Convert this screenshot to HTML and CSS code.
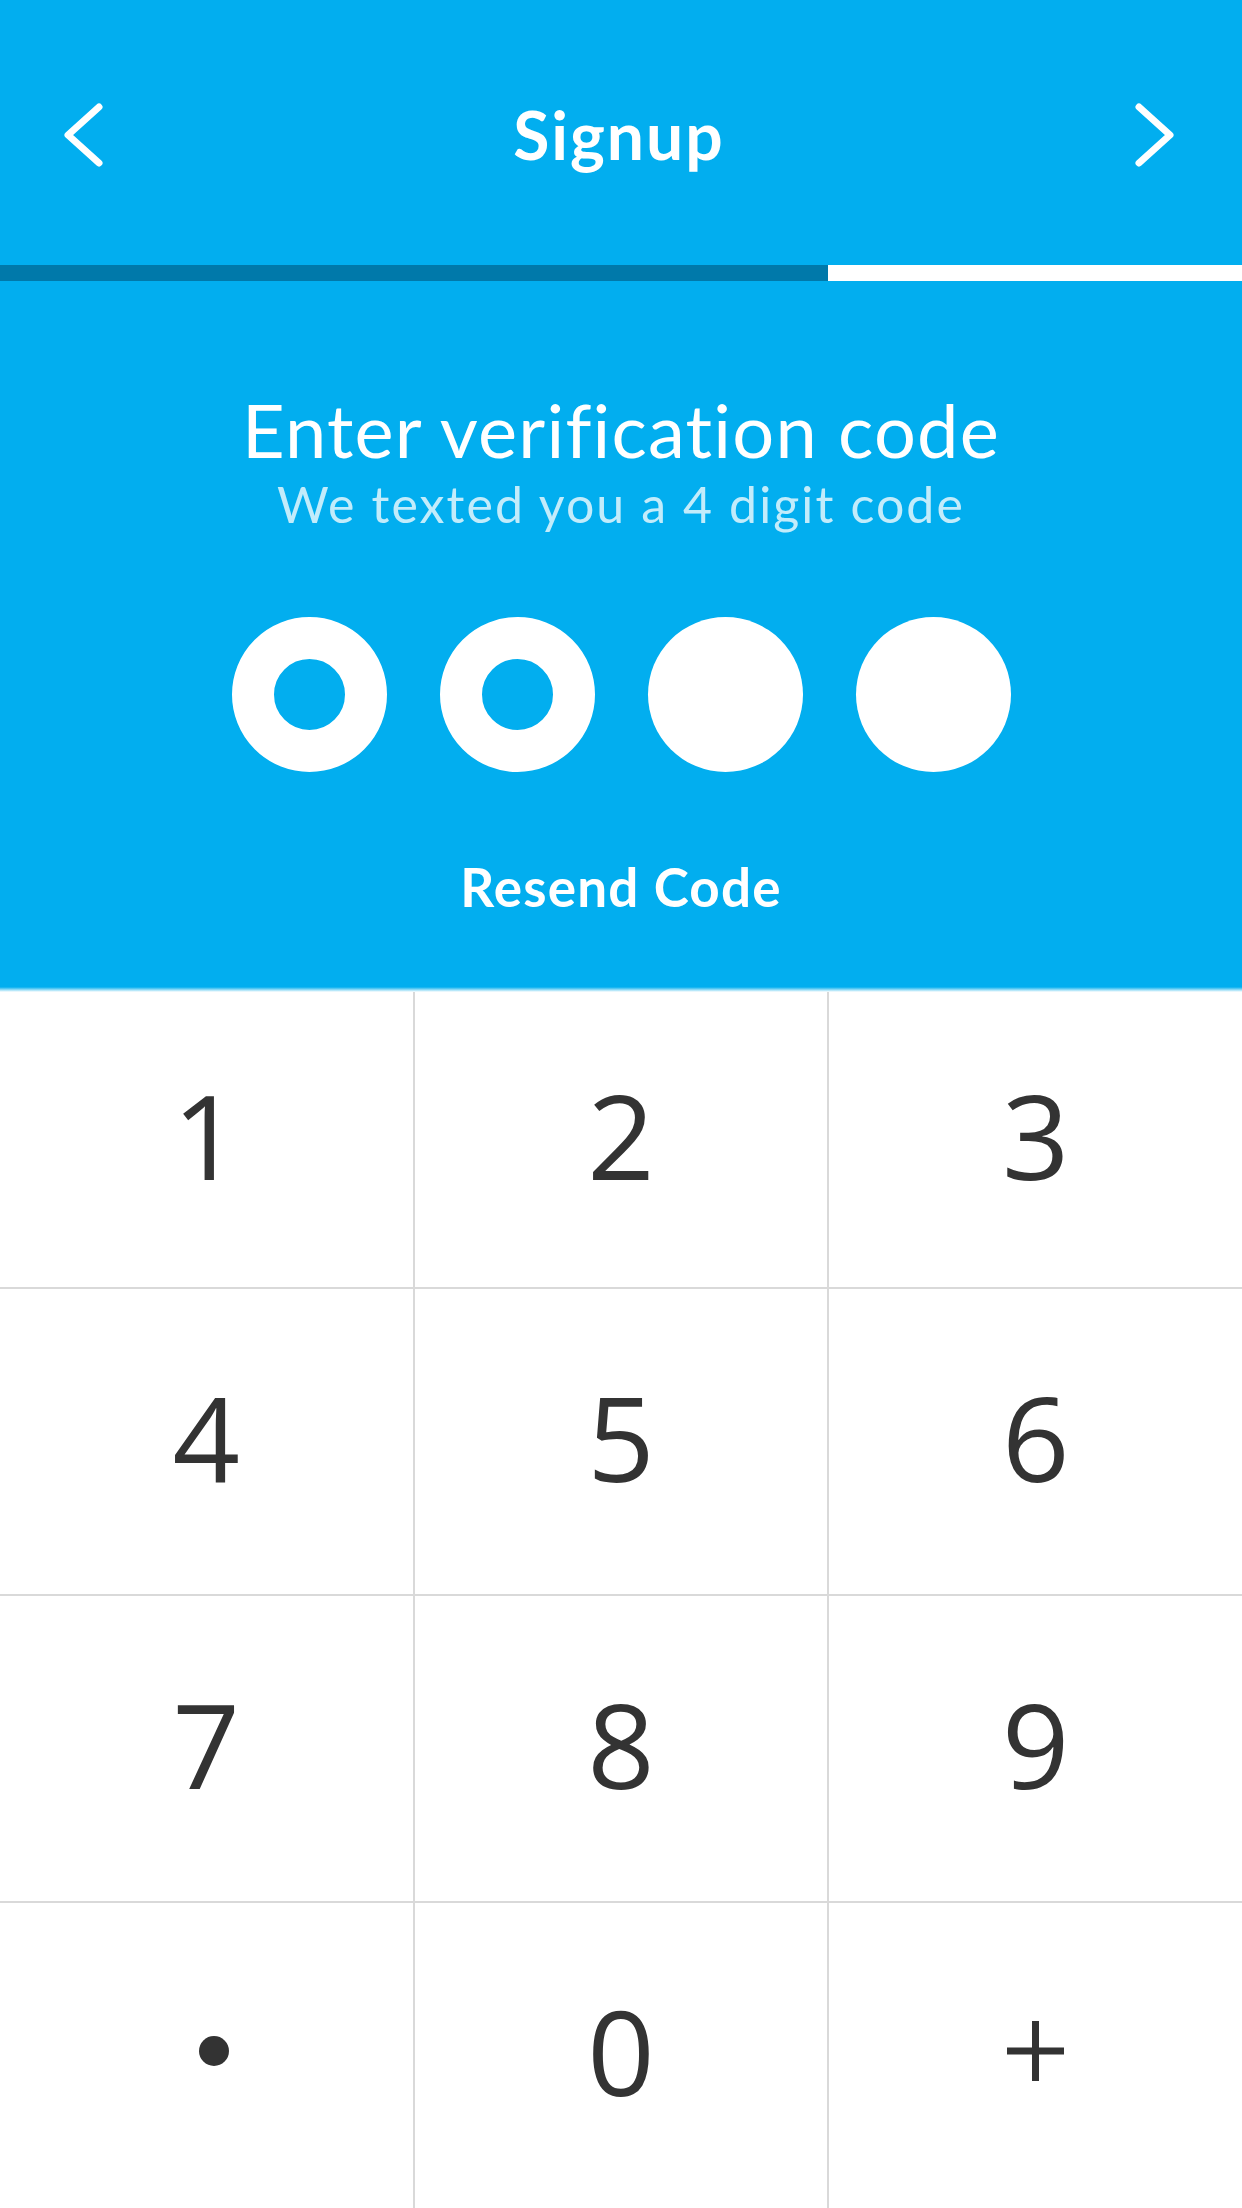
FILE: index.html
```html
<!DOCTYPE html>
<html lang="en">
<head>
<meta charset="utf-8">
<title>Signup</title>
<link rel="stylesheet" href="styles.css">
</head>
<body>
<div class="app">
  <header class="topbar">
    <button class="nav-btn" aria-label="Back">
      <svg class="chevron" width="44" height="64" viewBox="0 0 44 64"><polyline points="37,4 6,32 37,60" /></svg>
    </button>
    <h1 class="title">Signup</h1>
    <button class="nav-btn" aria-label="Next">
      <svg class="chevron" width="44" height="64" viewBox="0 0 44 64"><polyline points="7,4 38,32 7,60" /></svg>
    </button>
  </header>
  <div class="progress"><div class="progress-fill" style="width:66.67%"></div></div>
  <section class="verify">
    <h2 class="verify-title">Enter verification code</h2>
    <p class="verify-sub">We texted you a 4 digit code</p>
    <div class="code-dots">
      <span class="code-dot entered"></span>
      <span class="code-dot entered"></span>
      <span class="code-dot"></span>
      <span class="code-dot"></span>
    </div>
    <a class="resend" href="#">Resend Code</a>
  </section>
  <div class="verify-edge"></div>
  <div class="keypad">
    <button class="key">1</button>
    <button class="key">2</button>
    <button class="key">3</button>
    <button class="key">4</button>
    <button class="key">5</button>
    <button class="key">6</button>
    <button class="key">7</button>
    <button class="key">8</button>
    <button class="key">9</button>
    <button class="key" aria-label="Dot"><span class="key-dot"></span></button>
    <button class="key">0</button>
    <button class="key" aria-label="Plus">
      <svg class="key-plus" width="57" height="60" viewBox="0 0 57 60"><line x1="28.5" y1="0" x2="28.5" y2="60"/><line x1="0" y1="30" x2="57" y2="30"/></svg>
    </button>
  </div>
</div>
</body>
</html>
```

FILE: styles.css
```css
* { box-sizing: border-box; }

html, body {
  margin: 0;
  padding: 0;
  background: #ffffff;
}

body {
  font-family: "Lato", "Noto Sans", "Liberation Sans", sans-serif;
  font-variant-ligatures: none;
  width: 1242px;
  height: 2208px;
  overflow: hidden;
}

.app {
  display: flex;
  flex-direction: column;
  height: 2208px;
}

.topbar {
  height: 265px;
  background: #02aeef;
  display: flex;
  align-items: center;
  justify-content: space-between;
  padding: 5px 66px 0 62px;
}

.nav-btn {
  background: none;
  border: 0;
  padding: 0;
  margin: 0;
  display: flex;
  cursor: pointer;
}

.chevron {
  display: block;
  fill: none;
  stroke: #ffffff;
  stroke-width: 7;
  stroke-linecap: round;
  stroke-linejoin: round;
}

.title {
  margin: 0;
  color: #ffffff;
  font-size: 66px;
  font-weight: 700;
  line-height: 1;
  letter-spacing: 2px;
}

.progress {
  height: 16px;
  background: #ffffff;
}

.progress-fill {
  height: 100%;
  background: #0079aa;
}

.verify {
  background: #02aeef;
  color: #ffffff;
  display: flex;
  flex-direction: column;
  align-items: center;
  padding: 112px 0 74px;
}

.verify-title {
  margin: 0;
  font-size: 74px;
  font-weight: 400;
  line-height: 1;
  letter-spacing: 1.2px;
}

.verify-sub {
  margin: 12px 0 0;
  font-size: 50px;
  font-weight: 400;
  line-height: 1;
  letter-spacing: 2.1px;
  color: rgba(255, 255, 255, 0.76);
}

.code-dots {
  display: flex;
  gap: 53px;
  margin-top: 88px;
}

.code-dot {
  width: 155px;
  height: 155px;
  border-radius: 50%;
  background: #ffffff;
}

.code-dot.entered {
  background: transparent;
  border: 42px solid #ffffff;
}

.resend {
  margin-top: 88px;
  color: #ffffff;
  text-decoration: none;
  font-size: 53px;
  font-weight: 700;
  line-height: 1;
  letter-spacing: 1.2px;
}

.verify-edge {
  height: 5px;
  background: linear-gradient(#02aeef, #9fe0f8 60%, #ffffff);
}

.keypad {
  flex: 1;
  display: grid;
  grid-template-columns: repeat(3, 1fr);
  grid-template-rows: 295px 305px 305px 1fr;
  gap: 2px;
  background: #d9d9d9;
}

.key {
  background: #ffffff;
  border: 0;
  margin: 0;
  padding: 0 0 10px;
  display: flex;
  align-items: center;
  justify-content: center;
  font-family: "Open Sans", "Noto Sans", "Liberation Sans", sans-serif;
  font-size: 118px;
  font-weight: 400;
  line-height: 1;
  color: #333333;
  cursor: pointer;
}

.key-dot {
  width: 30px;
  height: 30px;
  border-radius: 50%;
  background: #333333;
  margin-left: 16px;
}

.key-plus {
  display: block;
  stroke: #333333;
  stroke-width: 7;
}
```
